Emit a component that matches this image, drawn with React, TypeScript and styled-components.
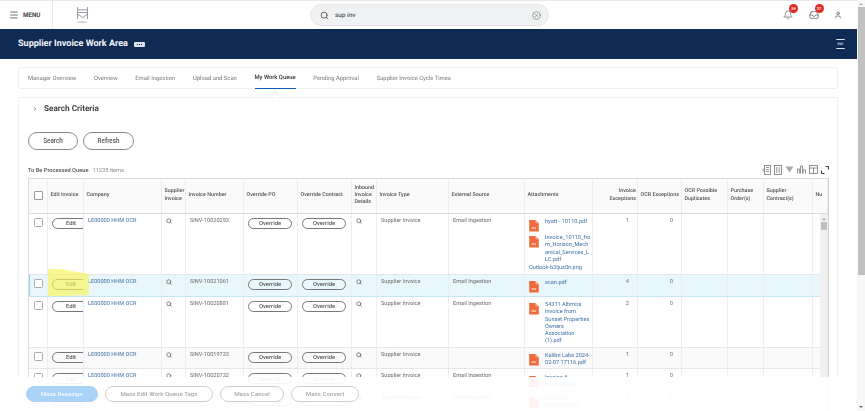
import React from "react";
import styled, { createGlobalStyle } from "styled-components";
import { Menu, Search, CircleX, Bell, Inbox, User, ChevronRight } from "lucide-react";

const Global = createGlobalStyle`
  html, body { margin: 0; padding: 0; background: #fff; overflow: hidden; }
  * { box-sizing: border-box; }
`;

const COLUMNS = "20px 36px 78px 24px 58px 54px 54px 25px 72px 76px 68px 45px 44px 46px 36px 49px";

const Shell = styled.div`
  position: relative;
  width: 865px;
  height: 411px;
  display: flex;
  overflow: hidden;
  font-family: Roboto, "Liberation Sans", sans-serif;
  color: #555;
  filter: blur(0.45px);
  text-rendering: geometricPrecision;
`;
const Main = styled.div`
  width: 857px;
  height: 411px;
  display: flex;
  flex-direction: column;
`;
const PageScroll = styled.div`
  width: 8px;
  height: 411px;
  background: #f7f7f7;
  display: flex;
  flex-direction: column;
  align-items: center;
`;
const ScrollArrow = styled.div<{ $down?: boolean }>`
  width: 0;
  height: 0;
  margin: 3px 0 ${(p) => (p.$down ? "3px" : "2px")};
  border-left: 2px solid transparent;
  border-right: 2px solid transparent;
  ${(p) => (p.$down ? "border-top: 2px solid #666;" : "border-bottom: 2px solid #aaa;")}
`;
const PageThumb = styled.div`
  width: 7px;
  height: 268px;
  background: #c1c1c1;
  margin-bottom: auto;
`;
const TopBar = styled.header`
  height: 29px;
  flex: none;
  border-top: 1px solid #e8e8e8;
  background: #fff;
  display: flex;
  align-items: center;
  position: relative;
`;
const MenuBlock = styled.div`
  width: 53px;
  height: 28px;
  border-right: 1px solid #e9e9e9;
  display: flex;
  align-items: center;
  gap: 4px;
  padding-left: 9px;
  font-size: 6.2px;
  font-weight: 700;
  color: #444;
`;
const Logo = styled.div`
  margin-left: 23px;
  width: 12px;
  display: flex;
  flex-direction: column;
  align-items: center;
  gap: 2px;
  color: #6d7280;
  font-size: 2.4px;
`;
const SearchBar = styled.div`
  margin-left: 222px;
  width: 239px;
  height: 22px;
  border: 1px solid #e6e8ea;
  border-radius: 11px;
  background: #f0f1f2;
  display: flex;
  align-items: center;
  padding: 0 7px 0 9px;
  font-size: 6.4px;
  color: #555;
  font-weight: 500;
`;
const SearchText = styled.span`
  margin-left: 6px;
  flex: 1;
`;
const Actions = styled.div`
  margin-left: auto;
  margin-right: 15px;
  display: flex;
  align-items: center;
  gap: 15.5px;
  color: #555;
`;
const IconBadgeWrap = styled.div`
  position: relative;
  display: flex;
`;
const Badge = styled.span`
  position: absolute;
  top: -6px;
  left: 6px;
  width: 9px;
  height: 9px;
  border-radius: 50%;
  background: #e02a22;
  color: #fff;
  font-size: 3.8px;
  font-weight: 700;
  display: flex;
  align-items: center;
  justify-content: center;
`;
const Band = styled.div`
  height: 30px;
  flex: none;
  background: #0f2b53;
  display: flex;
  align-items: center;
  padding: 0 12px 0 18px;
  color: #fff;
`;
const Title = styled.h1`
  margin: 0;
  font-size: 9.05px;
  font-weight: 700;
  color: #f1f4f8;
`;
const DotsChip = styled.span`
  margin-left: 6px;
  width: 11px;
  height: 5px;
  border-radius: 1px;
  background: #dde3ec;
  display: flex;
  align-items: center;
  justify-content: center;
  gap: 1px;
`;
const Dot = styled.i`
  width: 1px;
  height: 1px;
  background: #0f2b53;
`;
const PdfButton = styled.div`
  margin-left: auto;
  width: 9px;
  height: 10px;
  border-top: 1px solid #dfe5ee;
  border-bottom: 1px solid #dfe5ee;
  border-radius: 1px;
  font-size: 3.2px;
  font-weight: 700;
  color: #dfe5ee;
  display: flex;
  align-items: center;
  justify-content: center;
`;
const Content = styled.div`
  flex: 1;
  min-height: 0;
  padding: 8px 19px 0 18px;
  display: flex;
  flex-direction: column;
  gap: 8px;
`;
const TabsCard = styled.nav`
  position: relative;
  height: 22px;
  flex: none;
  border: 1px solid #f0f0f0;
  border-radius: 2px;
  display: flex;
  gap: 17.7px;
  padding-left: 9px;
`;
const Tab = styled.div<{ $active?: boolean }>`
  height: 21px;
  display: flex;
  align-items: center;
  font-size: 5.85px;
  white-space: nowrap;
  color: ${(p) => (p.$active ? "#333" : "#777")};
  font-weight: ${(p) => (p.$active ? 500 : 400)};
  border-bottom: ${(p) => (p.$active ? "1.5px solid #0b5fb4" : "none")};
  position: relative;
  ${(p) =>
    p.$active
      ? `&::after { content: ""; position: absolute; left: 50%; bottom: -10px; width: 5px; height: 5px; margin-left: -3px; background: #fff; border-left: 1px solid #eee; border-top: 1px solid #eee; transform: rotate(45deg); z-index: 2; }`
      : ""}
`;
const Card = styled.section`
  flex: 1;
  min-height: 0;
  border: 1px solid #f0f0f0;
  border-bottom: none;
  border-radius: 2px 2px 0 0;
  padding: 0 8px 0 9px;
  display: flex;
  flex-direction: column;
  overflow: hidden;
`;
const CriteriaRow = styled.div`
  height: 21px;
  padding-left: 4px;
  display: flex;
  align-items: center;
  gap: 6px;
  color: #444;
  font-size: 8.2px;
  font-weight: 700;
  flex: none;
`;
const ButtonRow = styled.div`
  margin-top: 13px;
  display: flex;
  gap: 5px;
  flex: none;
`;
const PillButton = styled.button<{ $w: number }>`
  width: ${(p) => p.$w}px;
  height: 18px;
  border: 1px solid #8b8b8b;
  border-radius: 9px;
  background: #fff;
  color: #555;
  font-family: inherit;
  font-size: 6.3px;
  font-weight: 500;
  padding: 0;
`;
const QueueLine = styled.div`
  height: 13px;
  margin-top: 14px;
  display: flex;
  align-items: center;
  font-size: 5.7px;
  font-weight: 500;
  color: #555;
  flex: none;
`;
const QueueCount = styled.span`
  margin-left: 4px;
  color: #8a8a8a;
  font-weight: 400;
`;
const Tools = styled.div`
  margin-left: auto;
  margin-right: 0;
  margin-top: -2px;
  display: flex;
  align-items: center;
  gap: 3px;
  color: #777;
`;
const Table = styled.div`
  margin-top: 0.5px;
  width: 801px;
  flex: 1;
  min-height: 0;
  border-top: 1px solid #dcdcdc;
  border-left: 1px solid #dcdcdc;
  border-right: 1px solid #cfcfcf;
  display: flex;
  flex-direction: column;
  overflow: hidden;
`;
const HeadRow = styled.div`
  height: 35px;
  flex: none;
  display: grid;
  grid-template-columns: ${COLUMNS} 1fr;
  margin-left: -1px;
  background: #fafafa;
  border-bottom: 1px solid #dcdcdc;
`;
const HeadCell = styled.div<{ $right?: boolean }>`
  display: flex;
  align-items: center;
  padding: 0 1px 0 2.5px;
  border-right: 1px solid #ededed;
  font-size: 5.4px;
  line-height: 7.3px;
  font-weight: 500;
  color: #555;
  overflow: hidden;
  text-align: ${(p) => (p.$right ? "right" : "left")};
  justify-content: ${(p) => (p.$right ? "flex-end" : "flex-start")};
`;
const HeadBox = styled.div`
  margin-left: 3.5px;
  width: 9px;
  height: 9px;
  flex: none;
  border: 1px solid #999;
  border-radius: 1px;
  background: #fff;
`;
const BodyWrap = styled.div`
  flex: 1;
  min-height: 0;
  display: flex;
  margin-left: -1px;
`;
const Rows = styled.div`
  width: 793px;
  display: flex;
  flex-direction: column;
`;
const InnerScroll = styled.div`
  width: 8px;
  background: #f0f0f0;
  display: flex;
  flex-direction: column;
  align-items: center;
  padding-top: 1px;
`;
const InnerThumb = styled.div`
  width: 6px;
  height: 8px;
  background: #c1c1c1;
`;
const Row = styled.div<{ $h: number; $selected?: boolean; $shade?: boolean }>`
  position: relative;
  flex: none;
  height: ${(p) => p.$h}px;
  display: grid;
  grid-template-columns: ${COLUMNS};
  background: ${(p) => (p.$selected ? "#e8f7fb" : p.$shade ? "#fafafa" : "#fff")};
  border-bottom: 1px solid ${(p) => (p.$selected ? "#c6e6ee" : "#e6e6e6")};
  ${(p) => (p.$selected ? "box-shadow: inset 1.5px 0 0 #5aa8ea;" : "")}
`;
const Cell = styled.div<{ $right?: boolean }>`
  padding: 4px ${(p) => (p.$right ? "8px" : "0")} 0 4px;
  border-right: 1px solid #eeeeee;
  font-size: 5.6px;
  line-height: 7.3px;
  color: #6a6a6a;
  overflow: hidden;
  text-align: ${(p) => (p.$right ? "right" : "left")};
`;
const LinkText = styled.span`
  color: #3f72a8;
`;
const CountZero = styled.span`
  color: #4f7f92;
`;
const BoxCell = styled.div`
  padding: 4px 0 0 6px;
  border-right: 1px solid #eeeeee;
`;
const RowBox = styled.div`
  width: 9px;
  height: 9px;
  border: 1px solid #aaa;
  border-radius: 1.5px;
  background: #fff;
`;
const RowButton = styled.button<{ $w: number }>`
  display: block;
  width: ${(p) => p.$w}px;
  height: 11px;
  margin: 0;
  padding: 0;
  border: 1px solid #777;
  border-radius: 6px;
  background: transparent;
  font-family: inherit;
  font-size: 5.9px;
  font-weight: 500;
  color: #555;
`;
const EditLabel = styled.span`
  display: block;
  width: 36px;
`;
const AttachCell = styled.div`
  padding: 5.5px 0 0 4px;
  border-right: 1px solid #eeeeee;
  font-size: 5.6px;
  line-height: 7.3px;
  color: #3f72a8;
  overflow: hidden;
`;
const AttachItem = styled.div`
  display: flex;
  gap: 6px;
  min-height: 15px;
  margin-bottom: 1px;
`;
const AttachName = styled.div`
  width: 46px;
  overflow-wrap: anywhere;
`;
const HighlightMark = styled.svg`
  position: absolute;
  left: 20px;
  top: -6px;
  pointer-events: none;
`;
const Footer = styled.div`
  position: absolute;
  left: 0;
  top: 377px;
  width: 857px;
  height: 34px;
  background: rgba(255, 255, 255, 0.92);
  display: flex;
  gap: 7px;
  padding: 9px 0 0 26px;
`;
const FooterButton = styled.button<{ $w: number; $primary?: boolean }>`
  width: ${(p) => p.$w}px;
  height: 16px;
  padding: 0;
  border-radius: 8px;
  border: 1px solid ${(p) => (p.$primary ? "#a9d3f7" : "#cfcfcf")};
  background: ${(p) => (p.$primary ? "#a9d3f7" : "#fff")};
  color: ${(p) => (p.$primary ? "#f4f9ff" : "#a8a8a8")};
  font-family: inherit;
  font-size: 6.2px;
  font-weight: 500;
`;

const PdfIcon = () => (
  <svg width="10" height="11.5" viewBox="0 0 10 12" style={{ flex: "none", marginTop: 1 }}>
    <path d="M0 0H6.5L10 3.5V12H0Z" fill="#ef6a3c" />
    <path d="M6.5 0V3.5H10Z" fill="#f7b49c" />
    <text x="5" y="9.8" fontSize="2.6" fill="#fff" textAnchor="middle" fontFamily="Roboto" fontWeight="700">
      PDF
    </text>
  </svg>
);
const Lens = () => <Search size={6} strokeWidth={3} color="#666" />;

const Attachments = ({ items, extra }: { items: string[]; extra?: string }) => (
  <AttachCell>
    {items.map((n) => (
      <AttachItem key={n}>
        <PdfIcon />
        <AttachName>{n}</AttachName>
      </AttachItem>
    ))}
    {extra && <div>{extra}</div>}
  </AttachCell>
);

type RowData = {
  h: number;
  num: string;
  source: string;
  files: string[];
  extra?: string;
  exc: number;
  selected?: boolean;
  shade?: boolean;
};

const ROWS: RowData[] = [
  { h: 61, num: "SINV-10020293", source: "Email Ingestion", files: ["hyatt - 10110.pdf", "Invoice_10110_from_Horizon_Mechanical_Services_LLC.pdf"], extra: "Outlook-b3Ijuz0n.png", exc: 1 },
  { h: 22, num: "SINV-10021061", source: "Email Ingestion", files: ["scan.pdf"], exc: 4, selected: true },
  { h: 51, num: "SINV-10020881", source: "Email Ingestion", files: ["54311 Altimira Invoice from Sunset Properties Owners Association (1).pdf"], exc: 2 },
  { h: 21.5, num: "SINV-10019733", source: "", files: ["Kalibri Labs 2024-02-07 17116.pdf"], exc: 1, shade: true },
  { h: 21.5, num: "SINV-10020732", source: "Email Ingestion", files: ["Invoice # N118042.PDF"], exc: 1 },
  { h: 22, num: "SINV-10020731", source: "Email Ingestion", files: ["Invoice # N118036.PDF"], exc: 2 },
];

const HEAD: { label: string; right?: boolean }[] = [
  { label: "Edit Invoice" },
  { label: "Company" },
  { label: "Supplier Invoice" },
  { label: "Invoice Number" },
  { label: "Override PO" },
  { label: "Override Contract" },
  { label: "Inbound Invoice Details" },
  { label: "Invoice Type" },
  { label: "External Source" },
  { label: "Attachments" },
  { label: "Invoice Exceptions", right: true },
  { label: "OCR Exceptions" },
  { label: "OCR Possible Duplicates" },
  { label: "Purchase Order(s)" },
  { label: "Supplier Contract(s)" },
  { label: "Nu" },
];

const ToolIcons = () => (
  <Tools>
    <svg width="9" height="10" viewBox="0 0 9 10" fill="none" stroke="currentColor" strokeWidth=".8">
      <rect x="2.5" y=".5" width="6" height="9" />
      <path d="M4 2.5H7M4 4.5H7M4 6.5H7M2.5 3L.5 5L2.5 7" />
    </svg>
    <svg width="8" height="10" viewBox="0 0 8 10" fill="none" stroke="currentColor" strokeWidth=".8">
      <rect x=".5" y=".5" width="7" height="9" />
      <path d="M2.8 2V8M5.2 2V8" />
    </svg>
    <svg width="9" height="9" viewBox="0 0 9 9" fill="#aaa">
      <path d="M.5 1.5H8.5L4.5 7.5Z" />
    </svg>
    <svg width="9" height="9" viewBox="0 0 9 9" fill="none" stroke="currentColor" strokeWidth=".8">
      <path d="M.5 8.5V4H2.5V8.5M3.5 8.5V1H5.5V8.5M6 8.5V5H8.5V8.5" />
    </svg>
    <svg width="9" height="9" viewBox="0 0 9 9" fill="none" stroke="currentColor" strokeWidth=".8">
      <rect x=".5" y=".5" width="8" height="8" />
      <path d="M.5 3H8.5M4.5 3V8.5" />
    </svg>
    <svg width="8" height="8" viewBox="0 0 8 8" fill="none" stroke="#333" strokeWidth="1">
      <path d="M.5 4.5V7.5H3.5M4.5 .5H7.5V3.5" />
    </svg>
  </Tools>
);

export default function App() {
  return (
    <>
      <Global />
      <Shell>
        <Main>
          <TopBar>
            <MenuBlock>
              <Menu size={10} strokeWidth={2} color="#555" />
              MENU
            </MenuBlock>
            <Logo>
              <svg width="11" height="12" viewBox="0 0 11 12" fill="none" stroke="#6d7280" strokeWidth=".7">
                <path d="M.5 0V5.5H10.5V0M.5 5.5V12M10.5 5.5V12M.5 2.8H10.5M.5 7L5.5 10.5L10.5 7" />
              </svg>
              HOTELS
            </Logo>
            <SearchBar>
              <Search size={9} strokeWidth={2} color="#444" />
              <SearchText>sup inv</SearchText>
              <CircleX size={9} strokeWidth={1.5} color="#666" />
            </SearchBar>
            <Actions>
              <IconBadgeWrap>
                <Bell size={10} strokeWidth={1.6} />
                <Badge>29</Badge>
              </IconBadgeWrap>
              <IconBadgeWrap>
                <Inbox size={10} strokeWidth={1.6} />
                <Badge>37</Badge>
              </IconBadgeWrap>
              <User size={8} strokeWidth={2} />
            </Actions>
          </TopBar>
          <Band>
            <Title>Supplier Invoice Work Area</Title>
            <DotsChip>
              <Dot />
              <Dot />
              <Dot />
            </DotsChip>
            <PdfButton>PDF</PdfButton>
          </Band>
          <Content>
            <TabsCard>
              <Tab>Manager Overview</Tab>
              <Tab>Overview</Tab>
              <Tab>Email Ingestion</Tab>
              <Tab>Upload and Scan</Tab>
              <Tab $active>My Work Queue</Tab>
              <Tab>Pending Approval</Tab>
              <Tab>Supplier Invoice Cycle Times</Tab>
            </TabsCard>
            <Card>
              <CriteriaRow>
                <ChevronRight size={6} strokeWidth={3} color="#3f72a8" />
                Search Criteria
              </CriteriaRow>
              <ButtonRow>
                <PillButton $w={50}>Search</PillButton>
                <PillButton $w={51}>Refresh</PillButton>
              </ButtonRow>
              <QueueLine>
                To Be Processed Queue
                <QueueCount>11235 items</QueueCount>
                <ToolIcons />
              </QueueLine>
              <Table>
                <HeadRow>
                  <HeadCell>
                    <HeadBox />
                  </HeadCell>
                  {HEAD.map((h) => (
                    <HeadCell key={h.label} $right={h.right}>
                      {h.label}
                    </HeadCell>
                  ))}
                </HeadRow>
                <BodyWrap>
                  <Rows>
                    {ROWS.map((r) => (
                      <Row key={r.num} $h={r.h} $selected={r.selected} $shade={r.shade}>
                        <BoxCell>
                          <RowBox />
                        </BoxCell>
                        <Cell>
                          <RowButton $w={50}>
                            <EditLabel>Edit</EditLabel>
                          </RowButton>
                        </Cell>
                        <Cell>
                          <LinkText>LE00000 HHM OCR</LinkText>
                        </Cell>
                        <Cell>
                          <Lens />
                        </Cell>
                        <Cell>{r.num}</Cell>
                        <Cell>
                          <RowButton $w={44}>Override</RowButton>
                        </Cell>
                        <Cell>
                          <RowButton $w={44}>Override</RowButton>
                        </Cell>
                        <Cell>
                          <Lens />
                        </Cell>
                        <Cell>Supplier Invoice</Cell>
                        <Cell>{r.source}</Cell>
                        <Attachments items={r.files} extra={r.extra} />
                        <Cell $right>{r.exc}</Cell>
                        <Cell $right>
                          <CountZero>0</CountZero>
                        </Cell>
                        <Cell />
                        <Cell />
                        <Cell />
                        {r.selected && (
                          <HighlightMark width="41" height="27" viewBox="0 0 41 27">
                            <path d="M0 0L12 0L41 5V26L12 27H0Z" fill="#f8f45f" fillOpacity="0.68" />
                          </HighlightMark>
                        )}
                      </Row>
                    ))}
                  </Rows>
                  <InnerScroll>
                    <ScrollArrow />
                    <InnerThumb />
                  </InnerScroll>
                </BodyWrap>
              </Table>
            </Card>
          </Content>
        </Main>
        <PageScroll>
          <ScrollArrow />
          <PageThumb />
          <ScrollArrow $down />
        </PageScroll>
        <Footer>
          <FooterButton $w={72} $primary>
            Mass Reassign
          </FooterButton>
          <FooterButton $w={108}>Mass Edit Work Queue Tags</FooterButton>
          <FooterButton $w={64}>Mass Cancel</FooterButton>
          <FooterButton $w={68}>Mass Convert</FooterButton>
        </Footer>
      </Shell>
    </>
  );
}
